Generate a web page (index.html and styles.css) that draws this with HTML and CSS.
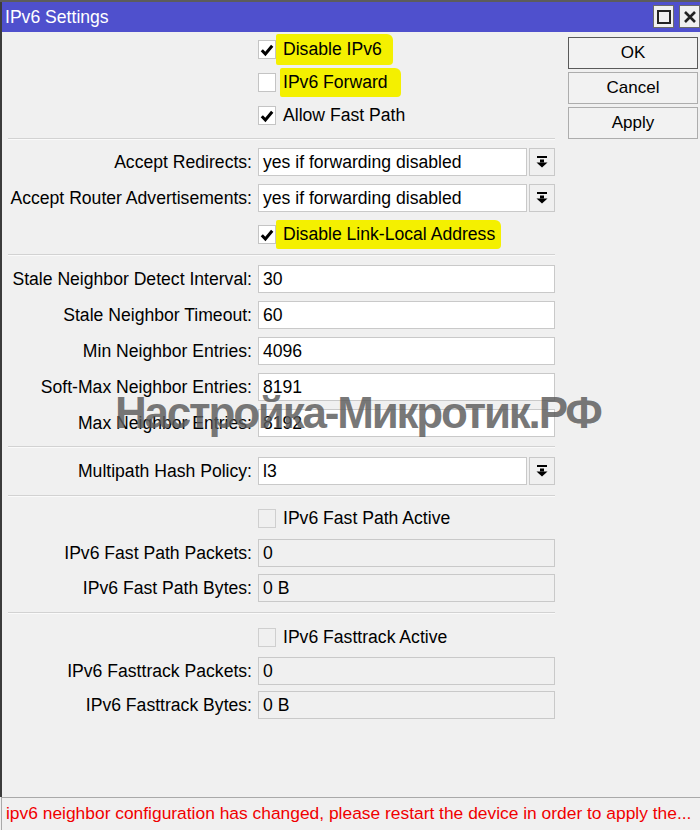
FILE: index.html
```html
<!DOCTYPE html>
<html lang="en">
<head>
  <meta charset="utf-8">
  <title>IPv6 Settings</title>
  <link rel="stylesheet" href="styles.css">
</head>
<body>
  <div class="window">
    <div class="titlebar">
      <span class="title">IPv6 Settings</span>
      <div class="title-buttons">
        <span class="tbtn">
          <svg width="14" height="14" viewBox="0 0 14 14"><rect x="1" y="1" width="12" height="12" fill="none" stroke="#222" stroke-width="2"/></svg>
        </span>
        <span class="tbtn">
          <svg width="14" height="14" viewBox="0 0 14 14"><path d="M2 2 L12 12 M12 2 L2 12" stroke="#222" stroke-width="2.6"/></svg>
        </span>
      </div>
    </div>

    <div class="main">
      <div class="form">
        <div class="section checks">
          <div class="row">
            <span></span>
            <label class="checkbox">
              <span class="box"><svg width="14" height="14" viewBox="0 0 14 14"><path d="M1.8 7.2 L5.4 11 L12.2 2.8" fill="none" stroke="#000" stroke-width="3"/></svg></span>
              <span class="mark">Disable IPv6</span>
            </label>
          </div>
          <div class="row">
            <span></span>
            <label class="checkbox">
              <span class="box"></span>
              <span class="mark mark-wide">IPv6 Forward</span>
            </label>
          </div>
          <div class="row">
            <span></span>
            <label class="checkbox">
              <span class="box"><svg width="14" height="14" viewBox="0 0 14 14"><path d="M1.8 7.2 L5.4 11 L12.2 2.8" fill="none" stroke="#000" stroke-width="3"/></svg></span>
              <span class="text">Allow Fast Path</span>
            </label>
          </div>
        </div>

        <div class="section">
          <div class="row">
            <span class="label">Accept Redirects:</span>
            <div class="select">
              <span class="field">yes if forwarding disabled</span>
              <span class="drop"><svg width="12" height="12" viewBox="0 0 12 12"><rect x="1" y="0" width="10" height="2" fill="#000"/><rect x="4" y="3.5" width="4" height="3" fill="#000"/><path d="M0.5 6.5 L11.5 6.5 L6 11.5 Z" fill="#000"/></svg></span>
            </div>
          </div>
          <div class="row">
            <span class="label">Accept Router Advertisements:</span>
            <div class="select">
              <span class="field">yes if forwarding disabled</span>
              <span class="drop"><svg width="12" height="12" viewBox="0 0 12 12"><rect x="1" y="0" width="10" height="2" fill="#000"/><rect x="4" y="3.5" width="4" height="3" fill="#000"/><path d="M0.5 6.5 L11.5 6.5 L6 11.5 Z" fill="#000"/></svg></span>
            </div>
          </div>
          <div class="row">
            <span></span>
            <label class="checkbox">
              <span class="box"><svg width="14" height="14" viewBox="0 0 14 14"><path d="M1.8 7.2 L5.4 11 L12.2 2.8" fill="none" stroke="#000" stroke-width="3"/></svg></span>
              <span class="mark mark-link">Disable Link-Local Address</span>
            </label>
          </div>
        </div>

        <div class="section neighbors">
          <div class="row">
            <span class="label">Stale Neighbor Detect Interval:</span>
            <span class="field">30</span>
          </div>
          <div class="row">
            <span class="label">Stale Neighbor Timeout:</span>
            <span class="field">60</span>
          </div>
          <div class="row">
            <span class="label">Min Neighbor Entries:</span>
            <span class="field">4096</span>
          </div>
          <div class="row">
            <span class="label">Soft-Max Neighbor Entries:</span>
            <span class="field">8191</span>
          </div>
          <div class="row">
            <span class="label">Max Neighbor Entries:</span>
            <span class="field">8192</span>
          </div>
        </div>

        <div class="section hash">
          <div class="row">
            <span class="label">Multipath Hash Policy:</span>
            <div class="select">
              <span class="field">l3</span>
              <span class="drop"><svg width="12" height="12" viewBox="0 0 12 12"><rect x="1" y="0" width="10" height="2" fill="#000"/><rect x="4" y="3.5" width="4" height="3" fill="#000"/><path d="M0.5 6.5 L11.5 6.5 L6 11.5 Z" fill="#000"/></svg></span>
            </div>
          </div>
        </div>

        <div class="section fast">
          <div class="row">
            <span></span>
            <label class="checkbox">
              <span class="box disabled"></span>
              <span class="text">IPv6 Fast Path Active</span>
            </label>
          </div>
          <div class="row">
            <span class="label">IPv6 Fast Path Packets:</span>
            <span class="field disabled">0</span>
          </div>
          <div class="row">
            <span class="label">IPv6 Fast Path Bytes:</span>
            <span class="field disabled">0 B</span>
          </div>
        </div>

        <div class="section fast last">
          <div class="row">
            <span></span>
            <label class="checkbox">
              <span class="box disabled"></span>
              <span class="text">IPv6 Fasttrack Active</span>
            </label>
          </div>
          <div class="row">
            <span class="label">IPv6 Fasttrack Packets:</span>
            <span class="field disabled">0</span>
          </div>
          <div class="row">
            <span class="label">IPv6 Fasttrack Bytes:</span>
            <span class="field disabled">0 B</span>
          </div>
        </div>
      </div>

      <div class="buttons">
        <button class="btn default">OK</button>
        <button class="btn">Cancel</button>
        <button class="btn">Apply</button>
      </div>

      <div class="watermark">Настройка-Микротик.РФ</div>
    </div>

    <div class="statusbar">ipv6 neighbor configuration has changed, please restart the device in order to apply the...</div>
  </div>
</body>
</html>
```

FILE: styles.css
```css
* {
  margin: 0;
  padding: 0;
  box-sizing: border-box;
}

body {
  font-family: 'Liberation Sans', Arial, sans-serif;
  font-size: 17.6px;
  color: #000;
  background: #f0f0f0;
  width: 700px;
  height: 830px;
  overflow: hidden;
}

.window {
  height: 830px;
  display: flex;
  flex-direction: column;
  border-top: 2px solid #5c5c5c;
}

.titlebar {
  height: 30px;
  background: #4f50cd;
  display: flex;
  align-items: center;
  justify-content: space-between;
  padding-left: 5px;
  border-left: 2px solid #3c3c3c;
}

.title {
  color: #fff;
  font-size: 17.6px;
  margin-left: -2px;
}

.title-buttons {
  display: flex;
  gap: 5px;
  align-self: flex-start;
  margin-top: 3px;
}

.tbtn {
  width: 21px;
  height: 23px;
  background: #f0f0f0;
  border: 1px solid #6a6a6a;
  display: flex;
  align-items: center;
  justify-content: center;
}

.main {
  flex: 1;
  display: flex;
  position: relative;
  border-left: 2px solid #3c3c3c;
}

.form {
  padding-left: 6px;
  width: 561px;
}

.section {
  display: flex;
  flex-direction: column;
  gap: 8px;
  padding: 9px 0 6px;
  border-bottom: 1px solid #d2d2d2;
  box-shadow: 0 1px 0 #fafafa;
  width: 547px;
}

.section.checks {
  gap: 0;
  padding: 1px 0 6px;
}

.section.checks .row {
  height: 33px;
}

.section.neighbors {
  padding: 10px 0 9px;
}

.section.hash {
  padding: 10px 0 10px;
}

.section.fast {
  gap: 7px;
  padding: 8px 0 10px;
}

.section.last {
  gap: 6px;
  padding-top: 10px;
  border-bottom: none;
  box-shadow: none;
}

.row {
  display: grid;
  grid-template-columns: 244px 297px;
  column-gap: 6px;
  align-items: center;
  height: 28px;
}

.label {
  text-align: right;
  white-space: nowrap;
}

.field {
  height: 28px;
  background: #fff;
  border: 1px solid #c9c9c9;
  padding-left: 4px;
  line-height: 26px;
  white-space: nowrap;
  overflow: hidden;
}

.field.disabled {
  background: #f0f0f0;
}

.select {
  display: grid;
  grid-template-columns: 269px 26px;
  column-gap: 2px;
}

.drop {
  height: 28px;
  border: 1px solid #c9c9c9;
  background: #f0f0f0;
  display: flex;
  align-items: center;
  justify-content: center;
}

.checkbox {
  display: flex;
  align-items: center;
}

.box {
  width: 18px;
  height: 19px;
  background: #fff;
  border: 1px solid #c4c4c4;
  display: flex;
  align-items: center;
  justify-content: center;
}

.box.disabled {
  background: #f0f0f0;
  border-color: #cfcfcf;
}

.text {
  padding-left: 7px;
}

.mark {
  background: #f4f000;
  padding: 5px 11px 5px 7px;
  border-radius: 2px 6px 4px 2px;
}

.mark-wide {
  margin-left: 4px;
  padding: 4px 13px 4px 3px;
}

.mark-link {
  padding: 4px 6px 4px 7px;
}

.buttons {
  display: flex;
  flex-direction: column;
  gap: 3px;
  margin-top: 5px;
  margin-left: 5px;
  width: 130px;
}

.btn {
  height: 32px;
  font-family: 'Liberation Sans', Arial, sans-serif;
  font-size: 17px;
  background: #f2f2f2;
  border: 1px solid #adadad;
  color: #000;
}

.btn.default {
  border-color: #5a5a5a;
}

.watermark {
  position: absolute;
  left: 113px;
  top: 356px;
  font-family: 'Liberation Sans', Arial, sans-serif;
  font-weight: bold;
  font-size: 44px;
  letter-spacing: -2.2px;
  color: rgba(90, 90, 90, 0.82);
  white-space: nowrap;
  pointer-events: none;
}

.statusbar {
  height: 33px;
  border-top: 1px solid #a9a9a9;
  border-left: 1px solid #a9a9a9;
  margin-left: 1px;
  padding-left: 4px;
  line-height: 31px;
  color: #f00000;
  font-size: 17.4px;
  white-space: nowrap;
  overflow: hidden;
}
```
